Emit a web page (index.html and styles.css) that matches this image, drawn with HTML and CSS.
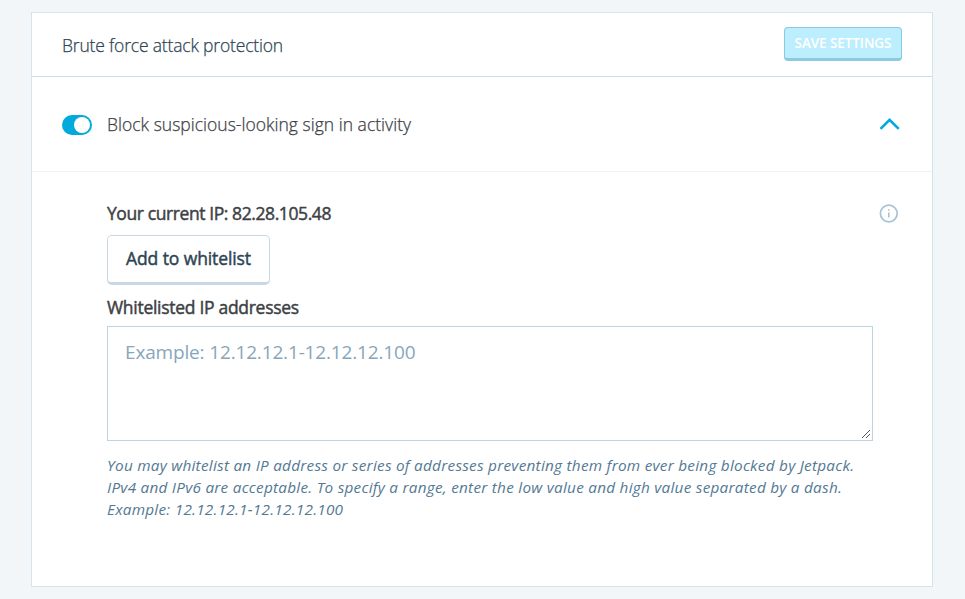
FILE: index.html
```html
<!DOCTYPE html>
<html>
<head>
	<meta charset="utf-8">
	<meta name="viewport" content="width=device-width,initial-scale=1">
	<title>Brute force attack protection</title>
	<link rel="stylesheet" href="styles.css">
</head>
<body>
	<form class="card">
		<!-- header -->
		<header class="card-header">
			<h2>Brute force attack protection</h2>
			<button type="button" class="save" disabled>SAVE SETTINGS</button>
		</header>
		<!-- toggle row -->
		<div class="toggle-row">
			<span class="toggle"></span>
			<span class="toggle-label">Block suspicious-looking sign in activity</span>
			<svg class="chevron" width="22" height="14" viewBox="0 0 22 14"><path d="M1.5 11.8L10.6 2.8l9.1 9" fill="none" stroke="#00aadc" stroke-width="2.6"/></svg>
		</div>
		<!-- whitelist settings -->
		<section class="settings">
			<div class="ip-row">
				<p class="label label-ip">Your current IP: 82.28.105.48</p>
				<svg class="info" width="20" height="20" viewBox="0 0 20 20"><circle cx="9.8" cy="10.5" r="8.4" fill="none" stroke="#a8c2d6" stroke-width="1.7"/><path d="M9 6.2h1.6v1.6H9zM9 9.4h1.6v5.2H9z" fill="#a8c2d6"/></svg>
			</div>
			<button type="button" class="add">Add to whitelist</button>
			<label class="label" for="whitelist">Whitelisted IP addresses</label>
			<div class="field">
				<textarea id="whitelist" placeholder="Example: 12.12.12.1-12.12.12.100"></textarea>
				<svg class="grip" width="10" height="10" viewBox="0 0 10 10"><path d="M1 9l8-8M5 9l4-4" fill="none" stroke="#555" stroke-width="1"/></svg>
			</div>
			<p class="help">
				You may whitelist an IP address or series of addresses preventing them from ever being blocked by Jetpack.<br>
				IPv4 and IPv6 are acceptable. To specify a range, enter the low value and high value separated by a dash.<br>
				Example: 12.12.12.1-12.12.12.100
			</p>
		</section>
	</form>
</body>
</html>
```
FILE: styles.css
```css
*{box-sizing: border-box;margin: 0;padding: 0;}
body{background-color: #f3f6f8;padding: 12px 32px 0 31px;font-family: "Segoe UI","Open Sans","Noto Sans",sans-serif;color: #3d4145;overflow: hidden;}
button,textarea{font-family: inherit;}
.card{height: 575px;background-color: #fff;border: 1px solid #d5e4ec;}
.card-header{height: 64px;display: flex;align-items: center;justify-content: space-between;padding: 0 30px;border-bottom: 1px solid #c8dfe9;}
.card-header h2{color: #2e4453;font-size: 17.5px;font-weight: 300;line-height: 24px;letter-spacing: -.18px;-webkit-text-stroke: .25px;white-space: nowrap;}
.save{width: 118px;height: 34px;margin-top: -2px;padding-top: 1px;background-color: #bceefd;border: 1px solid #8cc9e2;border-bottom-width: 3px;border-radius: 4px;color: #fff;font-size: 13.5px;font-weight: 600;letter-spacing: -.08px;white-space: nowrap;}
.toggle-row{height: 95px;display: flex;align-items: center;padding: 0 31px 0 30px;border-bottom: 1px solid #f0f3f5;}
.toggle{width: 30px;height: 20px;margin-top: 1px;border-radius: 10px;background-color: #00aadc;display: flex;align-items: center;justify-content: flex-end;padding-right: 2px;}
.toggle:after{content: "";width: 16px;height: 16px;border-radius: 50%;background-color: #fff;}
.toggle-label{font-size: 17.5px;font-weight: 300;line-height: 24px;letter-spacing: .02px;-webkit-text-stroke: .25px;margin-left: 15px;white-space: nowrap;}
.chevron{margin-left: auto;}
.settings{padding: 29px 59px 0 75px;}
.ip-row{display: flex;justify-content: space-between;align-items: center;margin-right: -26px;}
.label{display: block;font-size: 17.5px;font-weight: 400;line-height: 24px;letter-spacing: -.29px;-webkit-text-stroke: .45px;white-space: nowrap;}
.label-ip{letter-spacing: -.41px;}
.add{display: block;width: 163px;height: 50px;margin: 10px 0;padding-bottom: 2px;background-color: #fff;border: 1px solid #c8d7e1;border-bottom-width: 3px;border-radius: 5px;color: #2e4453;font-size: 17.5px;letter-spacing: -.1px;-webkit-text-stroke: .45px;white-space: nowrap;}
.field{position: relative;width: 766px;margin-top: 7px;}
textarea{display: block;width: 100%;height: 115px;padding: 11px 17px;border: 1px solid #c0d4e0;font-size: 19px;line-height: 28px;letter-spacing: -.16px;resize: none;}
textarea::placeholder{color: #87a6bc;}
.grip{position: absolute;right: 2px;bottom: 2px;}
.help{margin-top: 13px;color: #537994;font-size: 15.3px;font-style: italic;line-height: 22px;letter-spacing: .26px;white-space: nowrap;}
```
